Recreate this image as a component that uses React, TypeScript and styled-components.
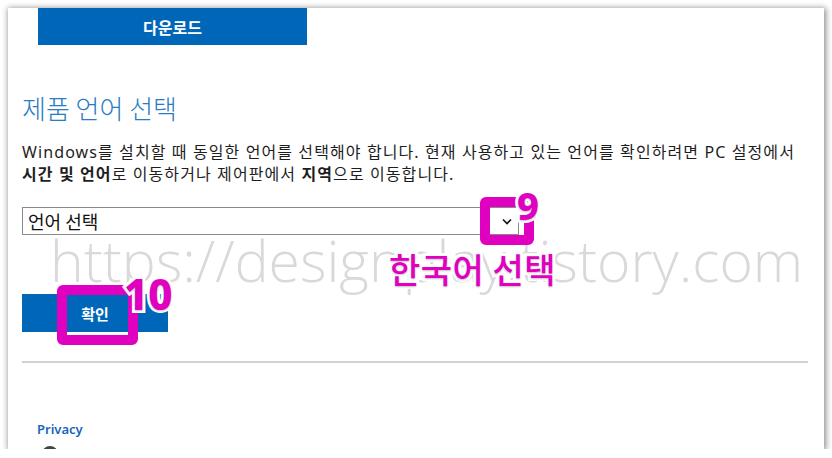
import React from 'react';
import styled, { createGlobalStyle } from 'styled-components';

const GlobalStyle = createGlobalStyle`
  html, body {
    margin: 0;
    padding: 0;
    background: #ffffff;
  }
  body {
    font-family: "Noto Sans", "Noto Sans CJK KR", sans-serif;
    color: #1a1a1a;
  }
`;

const Frame = styled.div`
  position: relative;
  margin: 8px 8px 0 8px;
  width: 816px;
  height: 441px;
  background: #fff;
  overflow: hidden;
  box-shadow: 1px 1px 6px 1px rgba(0, 0, 0, 0.45);
`;

const Content = styled.div`
  display: flex;
  flex-direction: column;
  align-items: flex-start;
  padding: 0 16px 0 14px;
`;

const DownloadButton = styled.div`
  margin-left: 16px;
  width: 269px;
  height: 37px;
  background: #0067b8;
  color: #fff;
  display: flex;
  align-items: center;
  justify-content: center;
  font-family: "Noto Sans CJK KR", sans-serif;
  font-size: 16px;
  font-weight: 700;
`;

const Heading = styled.h2`
  margin: 46px 0 0;
  font-family: "Noto Sans CJK KR", sans-serif;
  font-size: 26px;
  font-weight: 300;
  line-height: 34px;
  color: #2a7bc4;
`;

const Paragraph = styled.p`
  margin: 16px 0 0;
  font-family: "Noto Sans", "Noto Sans CJK KR", sans-serif;
  font-size: 16px;
  letter-spacing: 1.1px;
  line-height: 22px;
  color: #1e1e1e;
  white-space: nowrap;
  b {
    font-weight: 700;
  }
`;

const SelectBox = styled.div`
  margin-top: 22px;
  width: 484px;
  height: 26px;
  border: 1px solid #8a8a8a;
  display: flex;
  align-items: center;
  justify-content: space-between;
  padding: 0 6px 0 5px;
  font-family: "Noto Sans CJK KR", sans-serif;
  font-size: 18px;
  color: #111;
`;

const ConfirmButton = styled.div`
  margin-top: 59px;
  width: 146px;
  height: 38px;
  background: #0067b8;
  color: #fff;
  display: flex;
  align-items: center;
  justify-content: center;
  font-family: "Noto Sans CJK KR", sans-serif;
  font-size: 15px;
  font-weight: 700;
`;

const Divider = styled.hr`
  align-self: stretch;
  margin: 29px 0 0;
  border: none;
  height: 2px;
  background: #d2d2d2;
`;

const FooterLink = styled.a`
  margin: 57px 0 0 15px;
  font-family: "Noto Sans", sans-serif;
  font-size: 13px;
  font-weight: 600;
  color: #1565c0;
  text-decoration: none;
`;

const FooterIcon = styled.div`
  margin: 8px 0 0 20px;
  width: 16px;
  height: 16px;
  border-radius: 50%;
  background: #444;
`;

const Watermark = styled.div`
  position: absolute;
  left: 42px;
  top: 217px;
  font-family: "Open Sans", sans-serif;
  font-weight: 300;
  font-size: 57px;
  line-height: 70px;
  color: rgba(160, 160, 160, 0.4);
  white-space: nowrap;
  pointer-events: none;
`;

const Highlight = styled.div<{ x: number; y: number; w: number; h: number }>`
  position: absolute;
  left: ${({ x }) => x}px;
  top: ${({ y }) => y}px;
  width: ${({ w }) => w}px;
  height: ${({ h }) => h}px;
  box-sizing: border-box;
  border: 10px solid #e000c0;
  border-radius: 6px;
`;

const Badge = styled.div<{ x: number; y: number; size: number }>`
  position: absolute;
  left: ${({ x }) => x}px;
  top: ${({ y }) => y}px;
  font-family: "Noto Sans", sans-serif;
  font-weight: 800;
  font-size: ${({ size }) => size}px;
  line-height: 1;
  color: #e000c0;
  -webkit-text-stroke: 6px #fff;
  paint-order: stroke fill;
  text-shadow: 0 1px 2px rgba(0, 0, 0, 0.25);
`;

const Caption = styled.div`
  position: absolute;
  left: 381px;
  top: 241px;
  font-family: "Noto Sans CJK KR", sans-serif;
  font-weight: 500;
  font-size: 34px;
  letter-spacing: 0.5px;
  line-height: 40px;
  color: #e000c0;
  -webkit-text-stroke: 6px #fff;
  paint-order: stroke fill;
  text-shadow: 0 1px 2px rgba(0, 0, 0, 0.25);
  white-space: nowrap;
`;

const Chevron = () => (
  <svg width="10" height="7" viewBox="0 0 10 7">
    <path d="M1 1.5 L5 5.5 L9 1.5" stroke="#111" strokeWidth="1.6" fill="none" />
  </svg>
);

export default function App() {
  return (
    <>
      <GlobalStyle />
      <Frame>
        <Content>
          <DownloadButton>다운로드</DownloadButton>
          <Heading>제품 언어 선택</Heading>
          <Paragraph>
            Windows를 설치할 때 동일한 언어를 선택해야 합니다. 현재 사용하고 있는 언어를 확인하려면 PC 설정에서
            <br />
            <b>시간 및 언어</b>로 이동하거나 제어판에서 <b>지역</b>으로 이동합니다.
          </Paragraph>
          <SelectBox>
            <span>언어 선택</span>
            <Chevron />
          </SelectBox>
          <ConfirmButton>확인</ConfirmButton>
          <Divider />
          <FooterLink href="#">Privacy</FooterLink>
          <FooterIcon />
        </Content>
        <Watermark>https://designplay.tistory.com</Watermark>
        <Highlight x={472} y={189} w={54} h={48} />
        <Badge x={509} y={178} size={38}>9</Badge>
        <Caption>한국어 선택</Caption>
        <Highlight x={49} y={277} w={81} h={60} />
        <Badge x={116} y={265} size={42}>10</Badge>
      </Frame>
    </>
  );
}
